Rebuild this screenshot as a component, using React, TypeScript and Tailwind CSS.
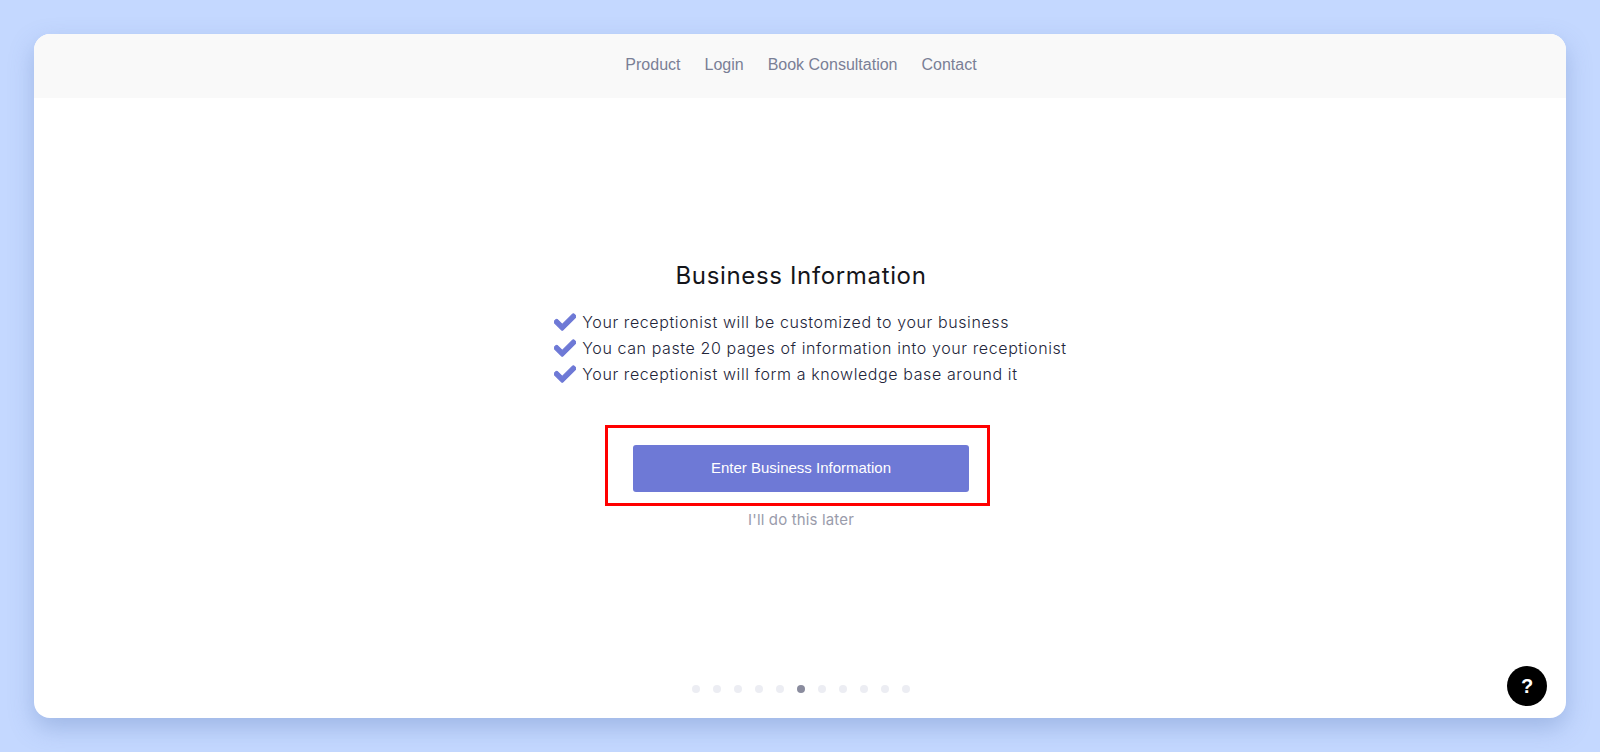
import React from "react";

const items = [
  "Your receptionist will be customized to your business",
  "You can paste 20 pages of information into your receptionist",
  "Your receptionist will form a knowledge base around it",
];

function Check() {
  return (
    <svg viewBox="0 0 512 512" className="w-[22px] h-[22px] shrink-0 fill-[#6e79d6] stroke-[#6e79d6] stroke-[24px]">
      <path d="M173.9 439.4 7.5 273c-10-10-10-26.2 0-36.2l36.2-36.2c10-10 26.2-10 36.2 0L192 312.7 432.1 72.6c10-10 26.2-10 36.2 0l36.2 36.2c10 10 10 26.2 0 36.2L210.1 439.4c-10 10-26.2 10-36.2 0z" />
    </svg>
  );
}

export default function App() {
  return (
    <div className="w-[1600px] h-[752px] bg-[#c4d8ff] pt-[34px] px-[34px] overflow-hidden font-['Inter',sans-serif]">
      <div className="relative w-[1532px] h-[684px] bg-white rounded-[16px] overflow-hidden shadow-[0_10px_25px_rgba(90,120,180,0.35)] flex flex-col">
        <nav className="h-[64px] shrink-0 bg-[#f9f9f9] flex items-center justify-center gap-[24px] text-[16px] text-[#7a7f96] font-['Liberation_Sans',sans-serif] pl-[2px] pb-[2px]">
          <span>Product</span>
          <span>Login</span>
          <span>Book Consultation</span>
          <span>Contact</span>
        </nav>
        <main className="flex flex-col items-center pt-[160px]">
          <h1 className="text-[24px] leading-[36px] font-normal text-[#14151a] tracking-[0.65px] ml-[2px]">Business Information</h1>
          <ul className="mt-[15px] flex flex-col ml-[21px]">
            {items.map((t) => (
              <li key={t} className="flex items-center h-[26px] gap-[6px] text-[16px] font-light text-[#23253a] tracking-[0.6px]">
                <Check />
                <span>{t}</span>
              </li>
            ))}
          </ul>
          <div className="mt-[38px] w-[385px] h-[81px] border-[3px] border-[#ff0000] pt-[17px] pl-[25px] mr-[5px]">
            <button className="w-[336px] h-[47px] rounded-[3px] bg-[#6e79d6] text-white text-[15px] font-['Liberation_Sans',sans-serif] font-normal">
              Enter Business Information
            </button>
          </div>
          <div className="mt-[2px] text-[15px] leading-[24px] text-[#9a9cab] tracking-[0.15px] ml-[2px]">I'll do this later</div>
        </main>
        <div className="absolute left-[1px] right-0 bottom-[25px] flex justify-center gap-[13px]">
          {Array.from({ length: 11 }).map((_, i) => (
            <span key={i} className={i === 5 ? "w-[8px] h-[8px] rounded-full bg-[#8a8c9e]" : "w-[8px] h-[8px] rounded-full bg-[#ecedf3]"} />
          ))}
        </div>
        <div className="absolute left-[1473px] top-[632px] w-[40px] h-[40px] rounded-full bg-black text-white flex items-center justify-center text-[20px] font-bold font-['Liberation_Sans',sans-serif]">?</div>
      </div>
    </div>
  );
}
